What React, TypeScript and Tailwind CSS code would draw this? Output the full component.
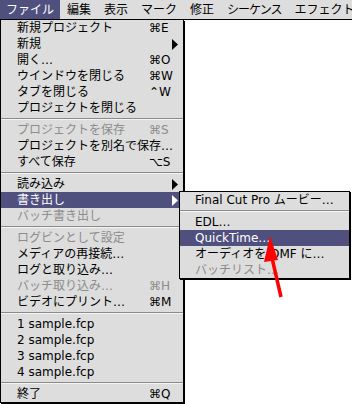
type Row =
  | { sep: true }
  | { label: string; keys?: string; sub?: boolean; off?: boolean; on?: boolean; sep?: false };

const mainRows: Row[] = [
  { label: "新規プロジェクト", keys: "⌘E" },
  { label: "新規", sub: true },
  { label: "開く…", keys: "⌘O" },
  { label: "ウインドウを閉じる", keys: "⌘W" },
  { label: "タブを閉じる", keys: "⌃W" },
  { label: "プロジェクトを閉じる" },
  { sep: true },
  { label: "プロジェクトを保存", keys: "⌘S", off: true },
  { label: "プロジェクトを別名で保存…" },
  { label: "すべて保存", keys: "⌥S" },
  { sep: true },
  { label: "読み込み", sub: true },
  { label: "書き出し", sub: true, on: true },
  { label: "バッチ書き出し", off: true },
  { sep: true },
  { label: "ログビンとして設定", off: true },
  { label: "メディアの再接続…" },
  { label: "ログと取り込み…" },
  { label: "バッチ取り込み…", keys: "⌘H", off: true },
  { label: "ビデオにプリント…", keys: "⌘M" },
  { sep: true },
  { label: "1 sample.fcp" },
  { label: "2 sample.fcp" },
  { label: "3 sample.fcp" },
  { label: "4 sample.fcp" },
  { sep: true },
  { label: "終了", keys: "⌘Q" },
];

const subRows: Row[] = [
  { label: "Final Cut Pro ムービー…" },
  { sep: true },
  { label: "EDL…" },
  { label: "QuickTime…", on: true },
  { label: "オーディオを OMF に…" },
  { label: "バッチリスト…", off: true },
];

const bar = ["ファイル", "編集", "表示", "マーク", "修正", "シーケンス", "エフェクト"];

function Separator() {
  return (
    <div className="h-[6px] pt-[2px]">
      <div className="h-px bg-[#8a8a8a]" />
      <div className="h-px bg-[#f4f4f4]" />
    </div>
  );
}

function Arrow({ white }: { white?: boolean }) {
  return (
    <svg width="7" height="11" viewBox="0 0 7 11" className="ml-[23px]">
      <polygon points="0,0 6,5.5 0,11" fill={white ? "#ffffff" : "#000000"} />
    </svg>
  );
}

function MenuRow({ row, pad }: { row: Row; pad: string }) {
  if (row.sep) return <Separator />;
  const color = row.on ? "bg-[#50507f] text-white" : row.off ? "text-[#8c8c8c]" : "text-black";
  return (
    <div className={`flex h-4 items-center ${pad} ${color}`}>
      <span className="flex-1 whitespace-nowrap leading-4">{row.label}</span>
      {row.keys && <span className="w-[34px] leading-4">{row.keys}</span>}
      {row.sub && (
        <span className="flex w-[34px] items-center">
          <Arrow white={row.on} />
        </span>
      )}
    </div>
  );
}

export default function App() {
  return (
    <div className="relative h-[404px] w-[352px] overflow-hidden bg-white font-['DejaVu_Sans','Noto_Sans_CJK_JP',sans-serif] text-[12px]">
      <div className="flex h-5 border-b border-black bg-[#dddddd] text-[12px]">
        {bar.map((name, i) => (
          <div
            key={name}
            className={`flex h-[19px] items-center whitespace-nowrap px-[6px] ${i === 0 ? "bg-[#50507f] text-white" : "ml-px text-black"} ${name === "シーケンス" ? "tracking-[-1px]" : ""}`}
          >
            {name}
          </div>
        ))}
      </div>

      <div className="w-[184px] border-x border-b border-black bg-[#dddddd] shadow-[1px_1px_0_#000]">
        {mainRows.map((row, i) => (
          <MenuRow key={i} row={row} pad="pl-4" />
        ))}
      </div>

      <div className="absolute left-[179px] top-[191px] w-[171px] border border-black bg-[#dddddd] shadow-[1px_1px_0_#000]">
        {subRows.map((row, i) => (
          <MenuRow key={i} row={row} pad="pl-[15px]" />
        ))}
      </div>

      <svg className="pointer-events-none absolute inset-0" width="352" height="404" viewBox="0 0 352 404">
        <line x1="281" y1="297" x2="272" y2="258" stroke="#ff0000" strokeWidth="3.5" />
        <polygon points="270,236 278,260 264,262" fill="#ff0000" />
      </svg>
    </div>
  );
}
